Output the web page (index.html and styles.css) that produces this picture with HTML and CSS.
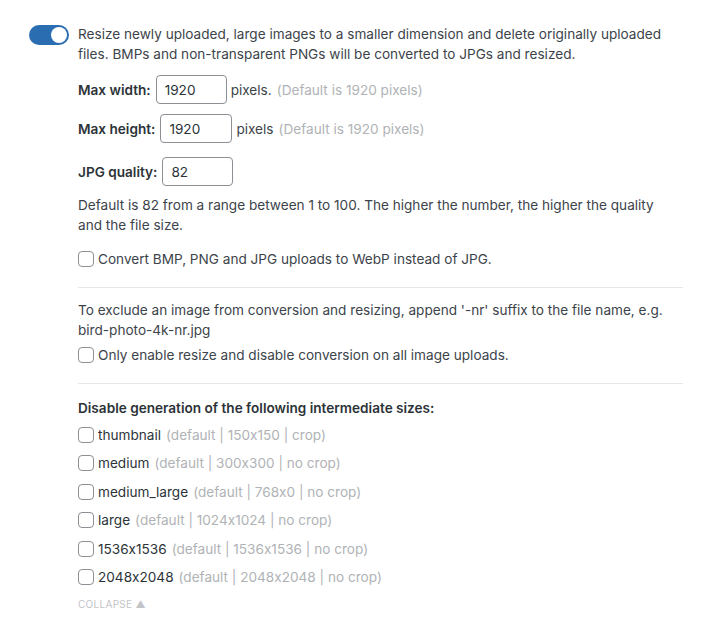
FILE: index.html
```html
<!DOCTYPE html>
<html lang="en">
<head>
<meta charset="utf-8">
<title>Image settings</title>
<link rel="stylesheet" href="styles.css">
</head>
<body>
<div class="wrap">
  <div class="toggle"><span class="knob"></span></div>
  <div class="content">
    <p class="intro">Resize newly uploaded, large images to a smaller dimension and delete originally uploaded files. BMPs and non-transparent PNGs will be converted to JPGs and resized.</p>
    <div class="field f1"><b>Max width:</b><span class="input">1920</span><span>pixels.</span><span class="hint">(Default is 1920 pixels)</span></div>
    <div class="field f2"><b>Max height:</b><span class="input">1920</span><span>pixels</span><span class="hint">(Default is 1920 pixels)</span></div>
    <div class="field f3"><b>JPG quality:</b><span class="input">82</span></div>
    <p class="desc">Default is 82 from a range between 1 to 100. The higher the number, the higher the quality and the file size.</p>
    <label class="check c1"><span class="box"></span>Convert BMP, PNG and JPG uploads to WebP instead of JPG.</label>
    <hr class="sep s1">
    <p class="desc d2">To exclude an image from conversion and resizing, append '-nr' suffix to the file name, e.g. bird-photo-4k-nr.jpg</p>
    <label class="check c2"><span class="box"></span>Only enable resize and disable conversion on all image uploads.</label>
    <hr class="sep s2">
    <h4 class="heading">Disable generation of the following intermediate sizes:</h4>
    <ul class="sizes">
      <li class="check"><span class="box"></span>thumbnail <span class="hint">(default | 150x150 | crop)</span></li>
      <li class="check"><span class="box"></span>medium <span class="hint">(default | 300x300 | no crop)</span></li>
      <li class="check"><span class="box"></span>medium_large <span class="hint">(default | 768x0 | no crop)</span></li>
      <li class="check"><span class="box"></span>large <span class="hint">(default | 1024x1024 | no crop)</span></li>
      <li class="check"><span class="box"></span>1536x1536 <span class="hint">(default | 1536x1536 | no crop)</span></li>
      <li class="check"><span class="box"></span>2048x2048 <span class="hint">(default | 2048x2048 | no crop)</span></li>
    </ul>
    <div class="collapse">COLLAPSE &#9650;</div>
  </div>
</div>
</body>
</html>
```
FILE: styles.css
```css
* { box-sizing: border-box; }
body {
  margin: 0;
  background: #fff;
  color: #3c434a;
  font-family: Inter, "Liberation Sans", sans-serif;
  font-size: 13.6px;
  line-height: 20px;
  font-feature-settings: "calt" 0;
}
.wrap {
  display: flex;
  gap: 9px;
  padding: 25px 0 0 29px;
}
.toggle {
  flex: none;
  width: 40px;
  height: 20px;
  border-radius: 10px;
  background: #2a6db0;
  display: flex;
  justify-content: flex-end;
  align-items: center;
  padding: 2px;
}
.knob {
  width: 16px;
  height: 16px;
  border-radius: 50%;
  background: #fff;
}
.content {
  width: 605px;
  display: flex;
  flex-direction: column;
}
p { margin: 0; max-width: 592px; }
.intro { line-height: 19.5px; }
.field {
  display: flex;
  align-items: center;
  gap: 5px;
}
.field b { font-weight: 600; color: #2c3338; }
.f1 { margin-top: 11px; }
.f2 { margin-top: 10px; }
.f3 { margin-top: 14px; }
.input {
  width: 71px;
  height: 29px;
  border: 1px solid #8c8f94;
  border-radius: 4px;
  padding: 0 8px;
  display: flex;
  align-items: center;
  color: #2c3338;
}
.f2 .input { width: 72px; }
.field .input + span { margin-left: -1px; }
.hint { color: #b0b3b6; }
.desc { margin-top: 9px; }
.check {
  display: flex;
  align-items: center;
  gap: 4px;
}
.box {
  flex: none;
  width: 16px;
  height: 16px;
  border: 1px solid #8c8f94;
  border-radius: 4px;
  background: #fff;
}
.c1 { margin-top: 14px; }
.sep {
  margin: 18px 0 0;
  border: 0;
  border-top: 1px solid #e6e6e6;
  height: 0;
}
.d2 { margin-top: 13px; line-height: 19.5px; }
.c2 { margin-top: 5px; }
.heading {
  margin: 14px 0 0;
  font-size: 13.6px;
  font-weight: 600;
  color: #2c3338;
}
.sizes {
  list-style: none;
  margin: 7px 0 0;
  padding: 0;
  display: flex;
  flex-direction: column;
  gap: 8.4px;
}
.sizes .check { color: #2c3338; }
.sizes .hint { margin-left: 1px; }
.collapse {
  margin-top: 7px;
  font-size: 10px;
  color: #c3c4c7;
  letter-spacing: 0.3px;
}
```
